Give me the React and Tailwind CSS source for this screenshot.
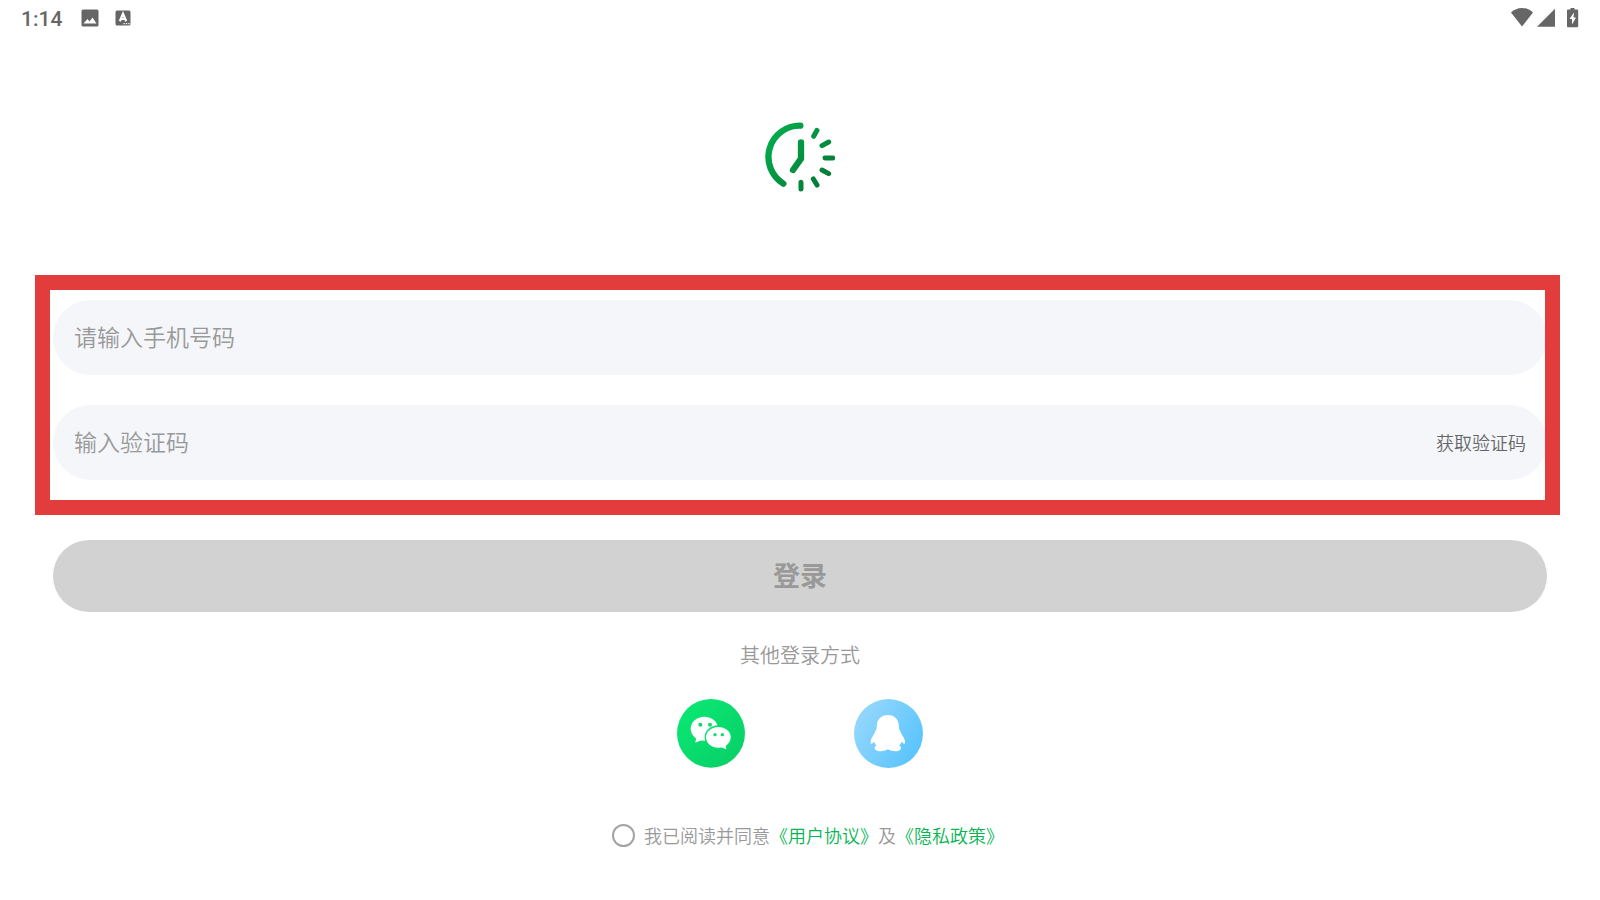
import React, { useState } from 'react';

function StatusBar() {
  return (
    <header className="flex h-9 items-center justify-between pl-[21px] pr-[21px] text-[#666666]">
      <div className="flex items-center">
        <span className="w-[60px] pt-px font-['Roboto'] text-[21px] leading-9 font-medium">1:14</span>
        <svg className="h-[18px] w-[18px]" viewBox="0 0 18 18" fill="currentColor" aria-hidden="true">
          <path
            fillRule="evenodd"
            d="M2 0.500h14a1.500 1.500 0 0 1 1.500 1.500v14a1.500 1.500 0 0 1-1.500 1.500H2A1.500 1.500 0 0 1 .5 16V2A1.500 1.500 0 0 1 2 .5zM2.500 14.500h13l-4-6-3 4-2-2.500z"
          />
        </svg>
        <svg className="ml-4 h-4 w-4" viewBox="0 0 16 16" aria-hidden="true">
          <rect x="0.500" y="0.500" width="15" height="15" rx="1.500" fill="currentColor" />
          <path d="M4.800 11.200L8 3.800l3.200 7.400M6 9h4" fill="none" stroke="#ffffff" strokeWidth="2.200" />
          <path d="M8.500 13h1.300v1.300H8.500zM10.900 13h1.300v1.300h-1.300zM13.300 13h1.300v1.300h-1.300z" fill="#ffffff" />
        </svg>
      </div>
      <div className="flex items-center">
        <svg className="h-5 w-[22px]" viewBox="0 0 22 20" fill="currentColor" aria-hidden="true">
          <path d="M11 18.500L0 4.500C3 1.600 6.800 0 11 0s8 1.600 11 4.500z" />
        </svg>
        <svg className="ml-1 h-5 w-[18px]" viewBox="0 0 18 20" fill="currentColor" aria-hidden="true">
          <path d="M18 .8v18H0z" />
        </svg>
        <svg className="ml-3 h-5 w-3" viewBox="0 0 12 20" aria-hidden="true">
          <path
            fill="currentColor"
            d="M3.500 0h4v1.500h2.500A1.200 1.200 0 0 1 11.200 2.700v15.300a1.200 1.200 0 0 1-1.200 1.200h-9a1.200 1.200 0 0 1-1.200-1.200V2.700A1.200 1.200 0 0 1 1 1.500h2.500z"
          />
          <path fill="#ffffff" d="M7 4.500L2.500 11H5v5.500L9 9.500H6.500z" />
        </svg>
      </div>
    </header>
  );
}

function Logo() {
  return (
    <svg className="h-[70px] w-[70px]" viewBox="45 37 210 210" fill="none" strokeLinecap="round" strokeLinejoin="round" role="img" aria-label="logo">
      <defs>
        <linearGradient id="logo" gradientUnits="userSpaceOnUse" x1="60" y1="70" x2="240" y2="230">
          <stop offset="0" stopColor="#04ac4b" />
          <stop offset="1" stopColor="#047636" />
        </linearGradient>
      </defs>
      <g stroke="url(#logo)" strokeWidth="19">
        <path d="M151 48A94 94 0 0 0 100 222" />
        <path d="M153 98V147L129 181" />
      </g>
      {/* marcas del reloj */}
      <g stroke="url(#logo)" strokeWidth="15">
        <path d="M201 62L191 80M236 97L216 108M225 145L248 145.010M216 181L236 192M190 208L201 226" />
        <path d="M153 218L153.010 238" />
      </g>
    </svg>
  );
}

function WechatIcon() {
  return (
    <svg className="h-[69px] w-[68px]" viewBox="51 42 204 207" aria-hidden="true">
      <defs>
        <linearGradient id="wechat" x1="0" y1="0" x2="1" y2="1">
          <stop offset="0" stopColor="#0aea74" />
          <stop offset="1" stopColor="#08cd66" />
        </linearGradient>
      </defs>
      <ellipse cx="153" cy="145" rx="102" ry="103" fill="url(#wechat)" />
      <ellipse cx="133" cy="131" rx="41" ry="36" fill="#ffffff" />
      <path d="M109 155L106 173L128 164z" fill="#ffffff" />
      <ellipse cx="175" cy="157" rx="41" ry="36" fill="#09dd6d" />
      <ellipse cx="175" cy="157" rx="37" ry="31" fill="#ffffff" />
      <path d="M180 185L199 193L196 176z" fill="#ffffff" />
      <g fill="#09dd6d">
        <circle cx="121" cy="119" r="6" />
        <circle cx="150" cy="119" r="6" />
        <circle cx="165" cy="149" r="5" />
        <circle cx="187" cy="149" r="5" />
      </g>
    </svg>
  );
}

function QQIcon() {
  return (
    <svg className="h-[69px] w-[69px]" viewBox="583 42 206 206" aria-hidden="true">
      <defs>
        <linearGradient id="qq" x1="0" y1="0.200" x2="1" y2="0.800">
          <stop offset="0" stopColor="#98d8fc" />
          <stop offset="1" stopColor="#55c3fd" />
        </linearGradient>
      </defs>
      <circle cx="686" cy="145" r="103" fill="url(#qq)" />
      <path
        fill="#ffffff"
        d="M684 90C664 90 651 104 651 123C651 129 650 131 648 136C645 142 644 145 641 150C635 158 632 166 633 174C635 179 640 172 643 169C644 174 647 178 650 181C643 184 643 191 649 195C657 200 674 198 684 192C694 198 711 200 719 195C725 191 725 184 718 181C721 178 724 174 725 169C728 172 733 179 735 174C736 166 733 158 727 150C724 145 723 142 720 136C718 131 717 129 717 123C717 104 704 90 684 90z"
      />
    </svg>
  );
}

function App() {
  const [phone, setPhone] = useState('');
  const [code, setCode] = useState('');
  const [agreed, setAgreed] = useState(false);

  const handleSubmit = (e) => {
    e.preventDefault();
  };

  return (
    <div className="min-h-screen bg-white font-['Noto_Sans_CJK_SC',sans-serif] font-[350] text-[#999999]">
      <StatusBar />
      <main className="flex flex-col items-center px-[53px] pt-[86px]">
        <Logo />

        <form onSubmit={handleSubmit} className="mt-[108px] w-full">
          <div className="relative flex flex-col gap-[30px]">
            <input
              type="tel"
              aria-label="请输入手机号码"
              placeholder="请输入手机号码"
              value={phone}
              onChange={(e) => setPhone(e.target.value)}
              className="h-[75px] w-full rounded-full bg-[#f4f6fa] px-[21px] pb-1 text-[23px] outline-none placeholder:text-[#999999]"
            />
            <div className="flex h-[75px] items-center rounded-full bg-[#f4f6fa] px-[21px]">
              <input
                type="text"
                aria-label="输入验证码"
                placeholder="输入验证码"
                value={code}
                onChange={(e) => setCode(e.target.value)}
                className="h-full min-w-0 flex-1 bg-transparent pb-1 text-[23px] outline-none placeholder:text-[#999999]"
              />
              <button type="button" className="text-[18px] text-[#666666]">
                获取验证码
              </button>
            </div>
            {/* marco rojo sobre los campos */}
            <div className="pointer-events-none absolute -top-[25px] -right-[13px] -bottom-[35px] -left-[18px] border-[15px] border-[#e23c3c]"></div>
          </div>

          <button type="submit" className="mt-[60px] h-[72px] w-full rounded-full bg-[#d2d2d2] pb-0.5 text-[27px] font-bold text-[#999999]">
            登录
          </button>
        </form>

        <p className="mt-7 text-[20px] leading-[30px]">其他登录方式</p>
        <div className="mt-[29px] flex gap-[109px]">
          <button type="button" aria-label="微信登录" className="rounded-full">
            <WechatIcon />
          </button>
          <button type="button" aria-label="QQ登录" className="rounded-full">
            <QQIcon />
          </button>
        </div>

        <div className="mt-[52px] flex items-center pl-4 text-[18px] leading-[30px]">
          <input
            id="agree"
            type="checkbox"
            checked={agreed}
            onChange={(e) => setAgreed(e.target.checked)}
            className="mr-[9px] h-[23px] w-[23px] appearance-none rounded-full border-2 border-[#a3a3a3] checked:bg-[#06ad50]"
          />
          <label htmlFor="agree">我已阅读并同意</label>
          <a href="#terms" className="text-[#06b552]">《用户协议》</a>
          <span>及</span>
          <a href="#privacy" className="text-[#06b552]">《隐私政策》</a>
        </div>
      </main>
    </div>
  );
}

export default App;
